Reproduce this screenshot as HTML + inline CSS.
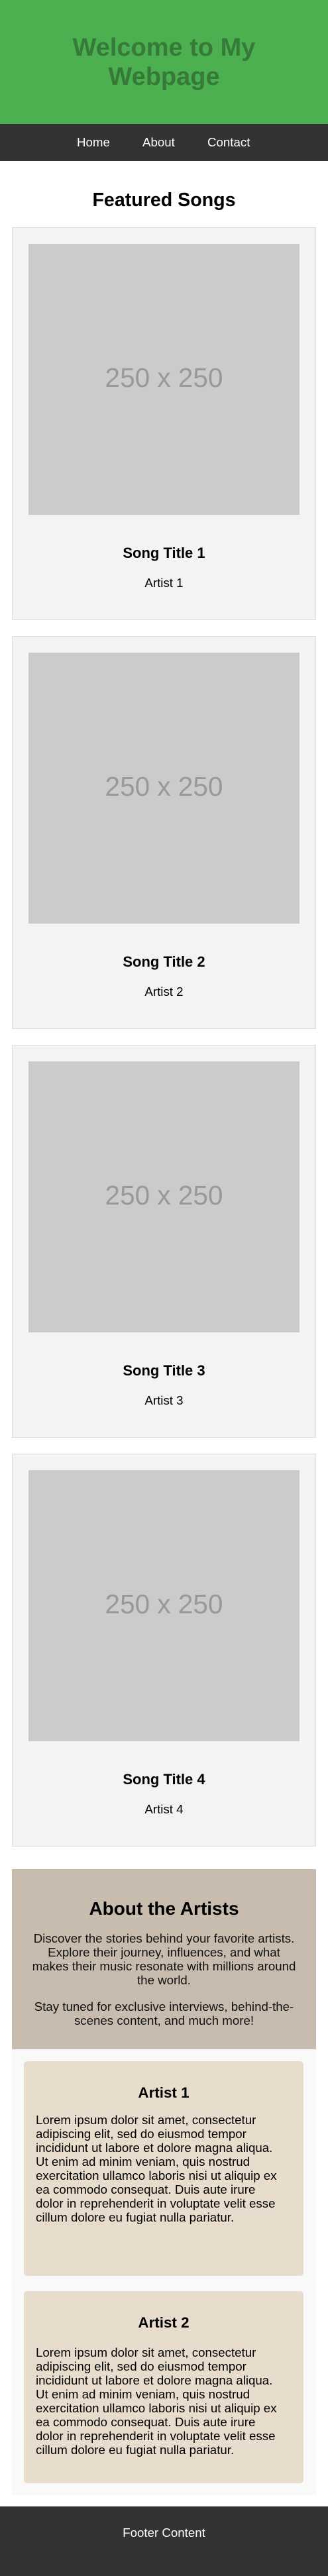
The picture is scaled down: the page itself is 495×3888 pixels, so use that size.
<!DOCTYPE html>
<html><head><meta charset="utf-8"><style>
*{margin:0;padding:0;box-sizing:border-box}
body{width:495px;height:3888px;position:relative;background:#fff;font-family:"Liberation Sans",Arial,sans-serif;color:#000;overflow:hidden}
.a{position:absolute}
.c{text-align:center;left:0;right:0}
.card{position:absolute;left:18px;width:459px;height:593px;background:#f3f3f3;border:1px solid #ddd}
.img{position:absolute;left:24px;top:24px;width:409px;height:409px;background:#cbcbcb;color:#999;font-size:40.5px;text-align:center;line-height:409px}
.img span{position:relative;top:-2px}
.t{position:absolute;left:0;right:0;top:478px;text-align:center;font-weight:bold;font-size:22px;line-height:26px}
.ar{position:absolute;left:0;right:0;top:525px;text-align:center;font-size:18.7px;line-height:22px}
.ac{position:absolute;left:36px;width:422px;background:#e8dccc;border-radius:5px}
.ac h3{position:absolute;left:0;right:0;top:35px;text-align:center;font-size:22.4px;line-height:26px}
.ac p{position:absolute;left:18px;width:378px;top:78px;font-size:18.7px;line-height:21px}
</style></head><body>
<div class="a" style="left:0;top:0;width:495px;height:187px;background:#4caf50"></div>
<div class="a c" style="top:50px;font-size:38px;font-weight:bold;line-height:44px;color:#357a38">Welcome to My<br>Webpage</div>
<div class="a" style="left:0;top:187px;width:495px;height:56px;background:#333"></div>
<div class="a" style="top:204px;left:116px;color:#fff;font-size:18.7px;line-height:22px">Home</div>
<div class="a" style="top:204px;left:215px;color:#fff;font-size:18.7px;line-height:22px">About</div>
<div class="a" style="top:204px;left:313px;color:#fff;font-size:18.7px;line-height:22px">Contact</div>
<div class="a c" style="top:285px;font-size:28.6px;font-weight:bold;line-height:34px">Featured Songs</div>

<div class="card" style="top:343px"><div class="img"><span>250 x 250</span></div><div class="t">Song Title 1</div><div class="ar">Artist 1</div></div>
<div class="card" style="top:960px"><div class="img"><span>250 x 250</span></div><div class="t">Song Title 2</div><div class="ar">Artist 2</div></div>
<div class="card" style="top:1577px"><div class="img"><span>250 x 250</span></div><div class="t">Song Title 3</div><div class="ar">Artist 3</div></div>
<div class="card" style="top:2194px"><div class="img"><span>250 x 250</span></div><div class="t">Song Title 4</div><div class="ar">Artist 4</div></div>

<div class="a" style="left:18px;top:2821px;width:459px;height:272px;background:#c8bcae"></div>
<div class="a c" style="top:2864px;font-size:28px;font-weight:bold;line-height:34px">About the Artists</div>
<div class="a" style="left:44px;width:407px;top:2915px;text-align:center;font-size:18.7px;line-height:21px;color:#111">Discover the stories behind your favorite artists. Explore their journey, influences, and what makes their music resonate with millions around the world.</div>
<div class="a" style="left:44px;width:407px;top:3018px;text-align:center;font-size:18.7px;line-height:21px;color:#111">Stay tuned for exclusive interviews, behind-the-scenes content, and much more!</div>
<div class="a" style="left:18px;top:3093px;width:459px;height:673px;background:#f9f9f9"></div>
<div class="ac" style="top:3111px;height:324px"><h3>Artist 1</h3><p>Lorem ipsum dolor sit amet, consectetur adipiscing elit, sed do eiusmod tempor incididunt ut labore et dolore magna aliqua. Ut enim ad minim veniam, quis nostrud exercitation ullamco laboris nisi ut aliquip ex ea commodo consequat. Duis aute irure dolor in reprehenderit in voluptate velit esse cillum dolore eu fugiat nulla pariatur.</p></div>
<div class="ac" style="top:3458px;height:290px"><h3>Artist 2</h3><p style="top:82px">Lorem ipsum dolor sit amet, consectetur adipiscing elit, sed do eiusmod tempor incididunt ut labore et dolore magna aliqua. Ut enim ad minim veniam, quis nostrud exercitation ullamco laboris nisi ut aliquip ex ea commodo consequat. Duis aute irure dolor in reprehenderit in voluptate velit esse cillum dolore eu fugiat nulla pariatur.</p></div>
<div class="a" style="left:0;top:3783px;width:495px;height:105px;background:#333"></div>
<div class="a c" style="top:3812px;color:#fff;font-size:18.7px;line-height:22px">Footer Content</div>
</body></html>
